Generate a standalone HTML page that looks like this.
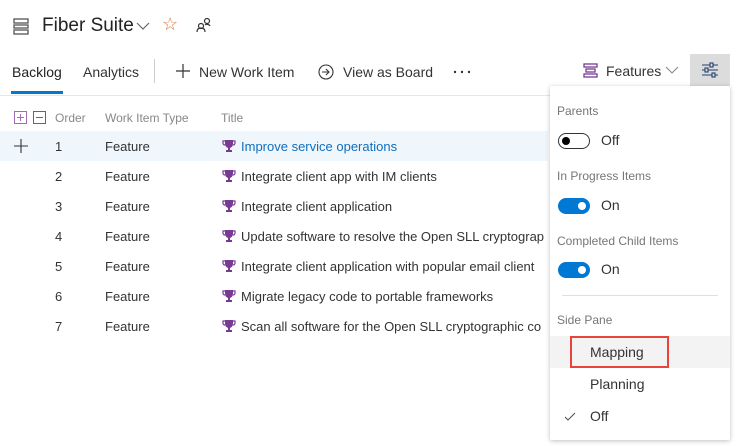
<!DOCTYPE html>
<html><head><style>
body{margin:0;width:741px;height:446px;background:#fff;font-family:"Liberation Sans",sans-serif;position:relative;overflow:hidden;color:#333}
.a{position:absolute;white-space:nowrap}
.r{position:absolute;left:0;width:741px;height:30px;font-size:13px;color:#333}
.r span{position:absolute;top:8px}
.r svg{position:absolute;left:222px;top:8px}
.panel{position:absolute;left:550px;top:86px;width:180px;height:354px;background:#fff;box-shadow:0 1px 5px rgba(0,0,0,.25);border-radius:2px}
.lbl{position:absolute;left:7px;font-size:12px;color:#767676}
.tg{position:absolute;left:8px;width:32px;height:16px;border-radius:9px;box-sizing:border-box}
.on{background:#0078d4}
.on::after{content:"";position:absolute;right:4px;top:4px;width:8px;height:8px;border-radius:50%;background:#fff}
.off{border:1px solid #333}
.off::after{content:"";position:absolute;left:3px;top:3px;width:8px;height:8px;border-radius:50%;background:#000}
.tt{position:absolute;left:51px;font-size:14px;color:#333}
</style></head><body>
<svg width="0" height="0" style="position:absolute"><defs><symbol id="tr" viewBox="0 0 14 14"><path d="M3 1h8v4a4 4 0 0 1-8 0z" fill="#773b93"/><path d="M3 2H1v2a2 2 0 0 0 2 2M11 2h2v2a2 2 0 0 1-2 2" fill="none" stroke="#773b93" stroke-width="1.2"/><rect x="6" y="8" width="2" height="3" fill="#773b93"/><rect x="4" y="11" width="6" height="2" fill="#773b93"/></symbol></defs></svg>
<svg class="a" style="left:13px;top:18px" width="17" height="17" viewBox="0 0 17 17" fill="none" stroke="#555" stroke-width="1.3"><rect x="1" y="1" width="14" height="4"/><rect x="1" y="7" width="14" height="3"/><rect x="1" y="12" width="14" height="4"/></svg>
<div class="a" style="left:42px;top:15px;font-size:19px;color:#222">Fiber Suite</div>
<svg class="a" style="left:136px;top:22px" width="14" height="9"><path d="M1 1l6 6 6-6" fill="none" stroke="#666" stroke-width="1.2"/></svg>
<div class="a" style="left:162px;top:14px;font-size:18px;color:#e07b39">☆</div>
<svg class="a" style="left:196px;top:17px" width="16" height="16" fill="none" stroke="#333" stroke-width="1.2"><circle cx="5" cy="9" r="2.5"/><path d="M1 15c0-3 2-4 4-4s4 1 4 4"/><circle cx="11" cy="4" r="2.5"/><path d="M9 8c1-1 4-1 5 1"/></svg>
<div class="a" style="left:12px;top:64px;font-size:14px;color:#222">Backlog</div>
<div class="a" style="left:11px;top:91px;width:52px;height:3px;background:#0078d4"></div>
<div class="a" style="left:83px;top:64px;font-size:14px;color:#333">Analytics</div>
<div class="a" style="left:154px;top:59px;width:1px;height:24px;background:#ccc"></div>
<svg class="a" style="left:175px;top:63px" width="16" height="16" stroke="#333" stroke-width="1.2"><path d="M8 1v14M1 8h14"/></svg>
<div class="a" style="left:199px;top:64px;font-size:14px">New Work Item</div>
<svg class="a" style="left:318px;top:64px" width="16" height="16" fill="none" stroke="#333" stroke-width="1.1"><circle cx="8" cy="8" r="7"/><path d="M4 8h7M8 5l3 3-3 3"/></svg>
<div class="a" style="left:343px;top:64px;font-size:14px">View as Board</div>
<svg class="a" style="left:453px;top:70px" width="20" height="4" fill="#333"><circle cx="2" cy="2" r="1.2"/><circle cx="9" cy="2" r="1.2"/><circle cx="16" cy="2" r="1.2"/></svg>
<svg class="a" style="left:583px;top:63px" width="15" height="15" fill="none" stroke="#773b93" stroke-width="1.3"><rect x="1" y="1" width="13" height="3"/><rect x="3" y="6" width="9" height="3"/><rect x="1" y="11" width="13" height="3"/></svg>
<div class="a" style="left:606px;top:63px;font-size:14px">Features</div>
<svg class="a" style="left:665px;top:66px" width="14" height="9"><path d="M1 1l6 6 6-6" fill="none" stroke="#888" stroke-width="1.1"/></svg>
<div class="a" style="left:690px;top:54px;width:40px;height:32px;background:#dcdcdc"></div>
<svg class="a" style="left:701px;top:61px" width="18" height="18" fill="none" stroke="#1f3f6e" stroke-width="1.1"><path d="M1 4h16M1 9h16M1 14h16"/><rect x="9" y="2" width="3" height="4" fill="#dcdcdc"/><rect x="4" y="7" width="3" height="4" fill="#dcdcdc"/><rect x="11" y="12" width="3" height="4" fill="#dcdcdc"/></svg>
<div class="a" style="left:0;top:95px;width:560px;height:1px;background:#e6e6e6"></div>
<svg class="a" style="left:14px;top:111px" width="40" height="13" fill="none" stroke-width="1"><rect x=".5" y=".5" width="12" height="12" stroke="#a46bb5"/><path d="M6.5 3v7M3 6.5h7" stroke="#a46bb5"/><rect x="19.5" y=".5" width="12" height="12" stroke="#666"/><path d="M22 6.5h7" stroke="#666"/></svg>
<div class="a" style="left:55px;top:111px;font-size:12px;color:#888">Order</div>
<div class="a" style="left:105px;top:111px;font-size:12px;color:#888">Work Item Type</div>
<div class="a" style="left:221px;top:111px;font-size:12px;color:#888">Title</div>
<div class="r" style="top:131px;background:linear-gradient(90deg,#eff6fc 548px,#fff 548px)"><svg style="left:14px;top:8px;position:absolute" width="14" height="14" stroke="#333" stroke-width="1.1"><path d="M7 0v14M0 7h14"/></svg><span style="left:55px">1</span><span style="left:105px">Feature</span><svg width="14" height="14"><use href="#tr"/></svg><span style="left:241px;color:#106ebe">Improve service operations</span></div>
<div class="r" style="top:161px"><span style="left:55px">2</span><span style="left:105px">Feature</span><svg width="14" height="14"><use href="#tr"/></svg><span style="left:241px">Integrate client app with IM clients</span></div>
<div class="r" style="top:191px"><span style="left:55px">3</span><span style="left:105px">Feature</span><svg width="14" height="14"><use href="#tr"/></svg><span style="left:241px">Integrate client application</span></div>
<div class="r" style="top:221px"><span style="left:55px">4</span><span style="left:105px">Feature</span><svg width="14" height="14"><use href="#tr"/></svg><span style="left:241px">Update software to resolve the Open SLL cryptograp</span></div>
<div class="r" style="top:251px"><span style="left:55px">5</span><span style="left:105px">Feature</span><svg width="14" height="14"><use href="#tr"/></svg><span style="left:241px">Integrate client application with popular email client</span></div>
<div class="r" style="top:281px"><span style="left:55px">6</span><span style="left:105px">Feature</span><svg width="14" height="14"><use href="#tr"/></svg><span style="left:241px">Migrate legacy code to portable frameworks</span></div>
<div class="r" style="top:311px"><span style="left:55px">7</span><span style="left:105px">Feature</span><svg width="14" height="14"><use href="#tr"/></svg><span style="left:241px">Scan all software for the Open SLL cryptographic co</span></div>
<div class="panel">
<div class="lbl" style="top:18px">Parents</div>
<div class="tg off" style="top:47px"></div><div class="tt" style="top:46px">Off</div>
<div class="lbl" style="top:83px">In Progress Items</div>
<div class="tg on" style="top:112px"></div><div class="tt" style="top:111px">On</div>
<div class="lbl" style="top:148px">Completed Child Items</div>
<div class="tg on" style="top:176px"></div><div class="tt" style="top:175px">On</div>
<div style="position:absolute;left:12px;top:209px;width:156px;height:1px;background:#e0e0e0"></div>
<div class="lbl" style="top:227px">Side Pane</div>
<div style="position:absolute;left:0;top:250px;width:180px;height:32px;background:#f3f3f3"></div>
<div style="position:absolute;left:20px;top:250px;width:99px;height:32px;box-sizing:border-box;border:2px solid #e8443a"></div>
<div class="tt" style="top:258px;left:40px">Mapping</div>
<div class="tt" style="top:290px;left:40px">Planning</div>
<svg style="position:absolute;left:14px;top:326px" width="12" height="10" fill="none" stroke="#555" stroke-width="1.1"><path d="M1 5l3 3 7-7"/></svg>
<div class="tt" style="top:322px;left:40px">Off</div>
</div>
</body></html>
